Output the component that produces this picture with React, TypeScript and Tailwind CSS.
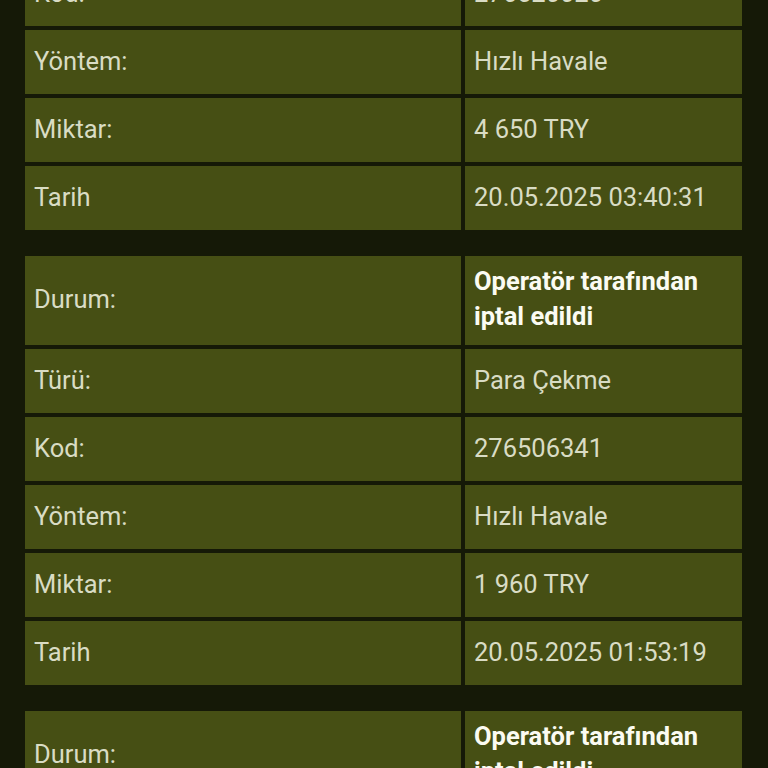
import React from 'react';

type Row = { label: string; value: string; strong?: boolean };

const transactions: Row[][] = [
  [
    { label: 'Durum:', value: 'Operatör tarafından iptal edildi', strong: true },
    { label: 'Türü:', value: 'Para Çekme' },
    { label: 'Kod:', value: '276520020' },
    { label: 'Yöntem:', value: 'Hızlı Havale' },
    { label: 'Miktar:', value: '4 650 TRY' },
    { label: 'Tarih', value: '20.05.2025 03:40:31' },
  ],
  [
    { label: 'Durum:', value: 'Operatör tarafından iptal edildi', strong: true },
    { label: 'Türü:', value: 'Para Çekme' },
    { label: 'Kod:', value: '276506341' },
    { label: 'Yöntem:', value: 'Hızlı Havale' },
    { label: 'Miktar:', value: '1 960 TRY' },
    { label: 'Tarih', value: '20.05.2025 01:53:19' },
  ],
  [
    { label: 'Durum:', value: 'Operatör tarafından iptal edildi', strong: true },
    { label: 'Türü:', value: 'Para Çekme' },
    { label: 'Kod:', value: '276498112' },
  ],
];

const TransactionTable: React.FC<{ rows: Row[] }> = ({ rows }) => (
  <div className="grid grid-cols-[436px_277px] gap-[4px]">
    {rows.map((row, i) => (
      <React.Fragment key={i}>
        <div
          className={`flex items-center bg-[#464f14] px-[9px] pb-[2px] text-[#d9dcc4] ${
            row.strong ? 'h-[89px]' : 'h-[64px]'
          }`}
        >
          {row.label}
        </div>
        <div
          className={`flex items-center bg-[#464f14] px-[9px] ${
            row.strong
              ? 'h-[89px] pb-[4px] font-bold leading-[35px] text-[#fbfbf2]'
              : 'h-[64px] pb-[2px] text-[#d9dcc4]'
          }`}
        >
          {row.value}
        </div>
      </React.Fragment>
    ))}
  </div>
);

const App: React.FC = () => {
  return (
    <div
      className="h-[768px] overflow-hidden bg-[#151907] text-[25.5px]"
      style={{ fontFamily: 'Roboto, "Noto Sans", sans-serif' }}
    >
      <div className="-mt-[199px] flex flex-col gap-[26px] pl-[25px]">
        {transactions.map((rows, i) => (
          <TransactionTable key={i} rows={rows} />
        ))}
      </div>
    </div>
  );
};

export default App;
